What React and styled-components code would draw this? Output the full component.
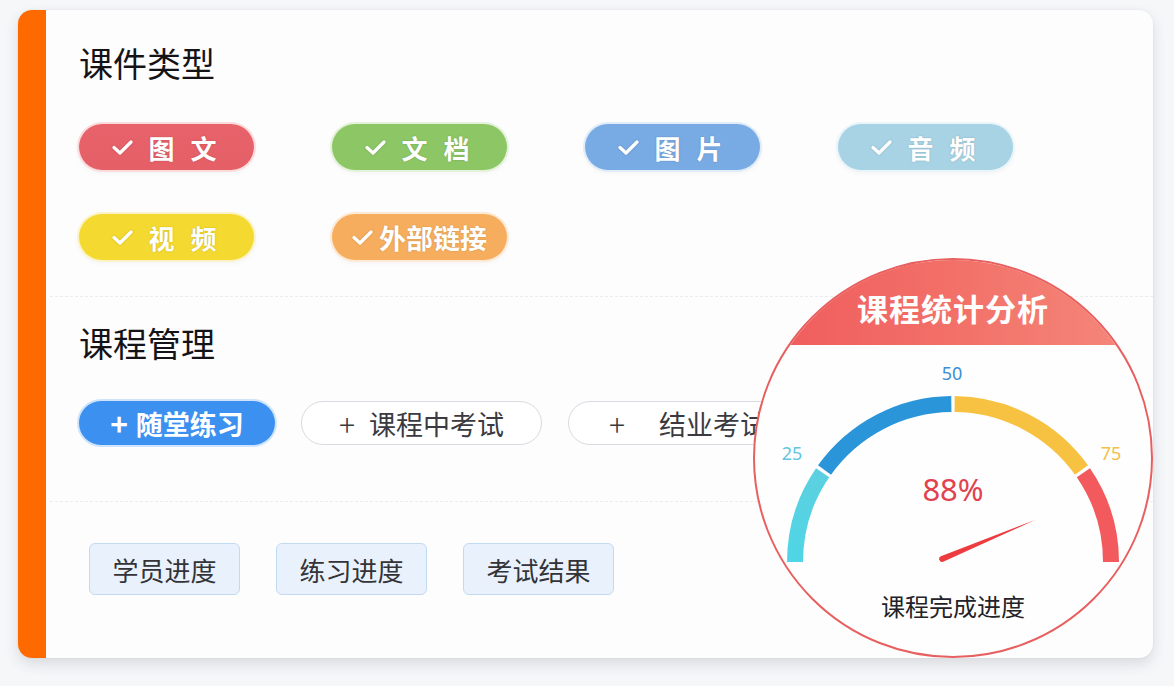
import React from "react";
import styled, { createGlobalStyle } from "styled-components";

const Global = createGlobalStyle`
  html, body { margin: 0; padding: 0; background: #f6f7f9; }
  body { font-family: "Noto Sans CJK SC", "Noto Sans", sans-serif; }
`;

const Page = styled.div`
  width: 1174px;
  height: 686px;
  padding: 10px 21px 0 18px;
  box-sizing: border-box;
`;

const Card = styled.div`
  position: relative;
  display: flex;
  height: 648px;
  border-radius: 14px;
  background: #fdfdfe;
  box-shadow: 0 6px 14px rgba(40, 50, 70, 0.14), 0 0 2px rgba(40, 50, 70, 0.08);
  overflow: hidden;
`;

const Bar = styled.div`
  width: 28px;
  flex: none;
  background: #ff6a00;
`;

const Content = styled.div`
  flex: 1;
  display: flex;
  flex-direction: column;
  padding-left: 4px;
`;

const Section = styled.section`
  padding: ${(p) => p.$pad};
  padding-left: 29px;
  border-bottom: ${(p) => (p.$last ? "none" : "1.5px dashed #eaecf0")};
`;

const Title = styled.h2`
  margin: 0;
  font-size: 34px;
  line-height: 40px;
  font-weight: 400;
  color: #141418;
`;

const TagGrid = styled.div`
  display: grid;
  grid-template-columns: repeat(4, 175px);
  column-gap: 78px;
  row-gap: 44px;
  margin-top: 41px;
`;

const Tag = styled.div`
  height: 46px;
  border-radius: 23px;
  background: ${(p) => p.$bg};
  box-shadow: 0 0 0 2px ${(p) => p.$ring}, 0 2px 6px rgba(0, 0, 0, 0.06);
  display: flex;
  align-items: center;
  justify-content: center;
  gap: ${(p) => (p.$tight ? "6px" : "16px")};
  color: #fff;
  font-size: ${(p) => (p.$tight ? "27px" : "26px")};
  font-weight: 700;
  letter-spacing: ${(p) => (p.$tight ? "0" : "5px")};
  text-shadow: 0 0 2px rgba(0, 0, 0, 0.18);
  white-space: pre;
  svg { flex: none; filter: drop-shadow(0 0 1px rgba(0, 0, 0, 0.15)); }
`;

const ActionRow = styled.div`
  display: flex;
  gap: 26px;
  margin-top: 38px;
`;

const Action = styled.div`
  height: 44px;
  width: ${(p) => p.$w}px;
  box-sizing: border-box;
  border-radius: 22px;
  display: flex;
  align-items: center;
  justify-content: center;
  gap: ${(p) => p.$gap}px;
  font-size: 27px;
  white-space: pre;
  ${(p) =>
    p.$primary
      ? `background: #3b90f0; color: #fff; font-weight: 700; box-shadow: 0 0 0 2px #cfe4fb;`
      : `background: #fff; color: #3a3a40; border: 1.5px solid #d9dbe0; font-weight: 400;`}
`;

const Plus = styled.span`
  font-size: 30px;
  font-weight: ${(p) => (p.$bold ? 700 : 300)};
  line-height: 1;
`;

const BoxRow = styled.div`
  display: flex;
  gap: 36px;
  padding-left: 10px;
`;

const Box = styled.div`
  width: 151px;
  height: 52px;
  box-sizing: border-box;
  border-radius: 6px;
  background: #e9f2fc;
  border: 1.5px solid #c2daf1;
  display: flex;
  align-items: center;
  justify-content: center;
  font-size: 26px;
  color: #333338;
`;

const Dial = styled.div`
  position: absolute;
  left: 735px;
  top: 248px;
  width: 400px;
  height: 400px;
  box-sizing: border-box;
  border-radius: 50%;
  border: 2px solid #e7605f;
  background: #fefefe;
  overflow: hidden;
  display: flex;
  flex-direction: column;
  align-items: center;
`;

const Cap = styled.div`
  flex: none;
  width: 100%;
  height: 85px;
  background: linear-gradient(90deg, #ef5b5d 0%, #f27068 50%, #f58a7c 100%);
  display: flex;
  justify-content: center;
  align-items: flex-end;
  padding-bottom: 22px;
  box-sizing: border-box;
  color: #fff;
  font-size: 31px;
  font-weight: 700;
  letter-spacing: 1px;
  line-height: 1;
`;

const Caption = styled.div`
  margin-top: 13px;
  font-size: 24px;
  color: #222228;
  line-height: 1;
`;

const Check = () => (
  <svg width="21" height="16" viewBox="0 0 21 16">
    <polyline points="2,8.5 8,14 19,3" fill="none" stroke="#fff" strokeWidth="3.2" strokeLinecap="round" strokeLinejoin="round" />
  </svg>
);

const tags = [
  { label: "图 文", bg: "linear-gradient(180deg,#e8626b,#e55f67)", ring: "#fbdbdc" },
  { label: "文 档", bg: "#8cc665", ring: "#e4f2da" },
  { label: "图 片", bg: "#78aae3", ring: "#e0ecf9" },
  { label: "音 频", bg: "#a7d3e4", ring: "#eaf5f9" },
  { label: "视 频", bg: "#f4d930", ring: "#fcf4c8" },
  { label: "外部链接", bg: "#f6ae5e", ring: "#fde9d4", tight: true },
];

const CX = 200;
const CY = 217;
const R = 158;

function pt(r, deg) {
  const a = (deg * Math.PI) / 180;
  return [CX - r * Math.cos(a), CY - r * Math.sin(a)];
}

function arc(a0, a1) {
  const [x0, y0] = pt(R, a0);
  const [x1, y1] = pt(R, a1);
  return `M ${x0.toFixed(2)} ${y0.toFixed(2)} A ${R} ${R} 0 0 1 ${x1.toFixed(2)} ${y1.toFixed(2)}`;
}

const segments = [
  { from: 0, to: 34.4, color: "url(#cyanGrad)" },
  { from: 35.6, to: 89.4, color: "#2a95d8" },
  { from: 90.6, to: 144.4, color: "#f7c241" },
  { from: 145.6, to: 180, color: "#f25a5e" },
];

function Gauge() {
  return (
    <svg width="400" height="236" viewBox="0 0 400 236">
      <defs>
        <linearGradient id="cyanGrad" x1="0" y1="1" x2="0" y2="0">
          <stop offset="0" stopColor="#4fd6e6" />
          <stop offset="1" stopColor="#5cd0e0" />
        </linearGradient>
      </defs>
      {segments.map((s) => (
        <path key={s.from} d={arc(s.from, s.to)} fill="none" stroke={s.color} strokeWidth="16" />
      ))}
      <text x="199" y="35" textAnchor="middle" fontSize="18" fill="#3a8fd6" fontFamily="Noto Sans, sans-serif">50</text>
      <text x="39" y="115" textAnchor="middle" fontSize="18" fill="#62c6dc" fontFamily="Noto Sans, sans-serif">25</text>
      <text x="358" y="115" textAnchor="middle" fontSize="18" fill="#f1c04c" fontFamily="Noto Sans, sans-serif">75</text>
      <text x="200" y="156" textAnchor="middle" fontSize="31" fill="#e2414e" fontFamily="Noto Sans, sans-serif">88%</text>
      <path d="M 282 175 L 190.16 216.76 A 3 3 0 0 1 187.84 211.24 Z" fill="#ee3b3f" />
    </svg>
  );
}

export default function App() {
  return (
    <Page>
      <Global />
      <Card>
        <Bar />
        <Content>
          <Section $pad="33px 0 36px">
            <Title>课件类型</Title>
            <TagGrid>
              {tags.map((t) => (
                <Tag key={t.label} $bg={t.bg} $ring={t.ring} $tight={t.tight}>
                  <Check />
                  <span>{t.label}</span>
                </Tag>
              ))}
            </TagGrid>
          </Section>
          <Section $pad="26px 0 56px">
            <Title>课程管理</Title>
            <ActionRow>
              <Action $primary $w={196} $gap={8}>
                <Plus $bold>+</Plus>
                <span>随堂练习</span>
              </Action>
              <Action $w={241} $gap={14}>
                <Plus>+</Plus>
                <span>课程中考试</span>
              </Action>
              <Action $w={240} $gap={34}>
                <Plus>+</Plus>
                <span>结业考试</span>
              </Action>
            </ActionRow>
          </Section>
          <Section $pad="41px 0 0" $last>
            <BoxRow>
              <Box>学员进度</Box>
              <Box>练习进度</Box>
              <Box>考试结果</Box>
            </BoxRow>
          </Section>
        </Content>
        <Dial>
          <Cap>课程统计分析</Cap>
          <Gauge />
          <Caption>课程完成进度</Caption>
        </Dial>
      </Card>
    </Page>
  );
}
